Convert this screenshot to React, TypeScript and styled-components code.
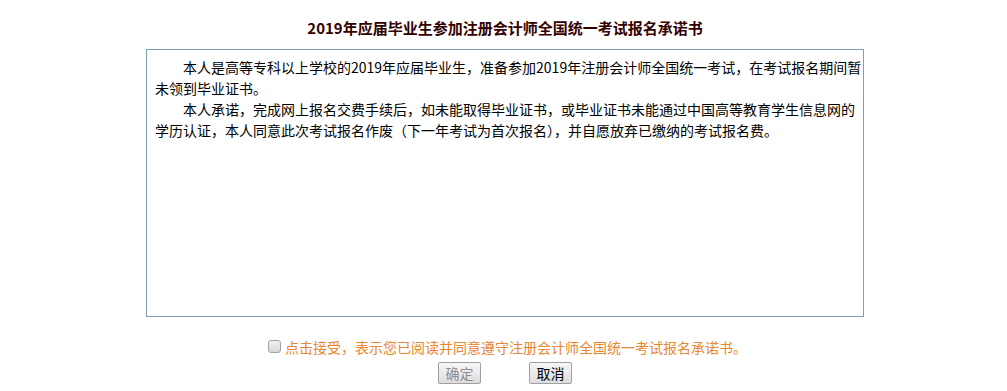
import React, { useState } from "react";
import styled, { createGlobalStyle } from "styled-components";

const GlobalStyle = createGlobalStyle`
	html, body {
		margin: 0;
		padding: 0;
		background: #fff;
	}
	body {
		font-family: "Noto Sans CJK SC", "Liberation Sans", sans-serif;
	}
`;

export default function App() {
	const [agreed, setAgreed] = useState<boolean>(false);
	return (
		<Page>
			<GlobalStyle />
			<Title>2019年应届毕业生参加注册会计师全国统一考试报名承诺书</Title>
			<PledgeBox>
				<Para>
					本人是高等专科以上学校的2019年应届毕业生，准备参加2019年注册会计师全国统一考试，在考试报名期间暂未领到毕业证书。
				</Para>
				<Para>
					本人承诺，完成网上报名交费手续后，如未能取得毕业证书，或毕业证书未能通过中国高等教育学生信息网的学历认证，本人同意此次考试报名作废（下一年考试为首次报名），并自愿放弃已缴纳的考试报名费。
				</Para>
			</PledgeBox>
			<AgreeRow>
				<CheckBox type="checkbox" checked={agreed} onChange={(e) => setAgreed(e.target.checked)} />
				<AgreeText>点击接受，表示您已阅读并同意遵守注册会计师全国统一考试报名承诺书。</AgreeText>
			</AgreeRow>
			<ButtonRow>
				<FormBtn disabled={!agreed}>确定</FormBtn>
				<FormBtn>取消</FormBtn>
			</ButtonRow>
		</Page>
	);
}

const Page = styled.div`
	display: flex;
	flex-direction: column;
	align-items: center;
	width: 100%;
	padding: 18px 0 0 3px;
	box-sizing: border-box;
`;

const Title = styled.h1`
	margin: 0 0 11px 0;
	font-size: 15px;
	line-height: 20px;
	font-weight: bold;
	color: #330000;
	text-align: center;
`;

const PledgeBox = styled.div`
	width: 718px;
	height: 268px;
	box-sizing: border-box;
	border: 1px solid #7f9db9;
	background: #fff;
	padding: 7px 1px 8px 8px;
	overflow: hidden;
`;

const Para = styled.p`
	margin: 0;
	font-size: 14px;
	line-height: 21px;
	color: #000;
	text-indent: 2em;
`;

const AgreeRow = styled.label`
	display: flex;
	align-items: center;
	gap: 4px;
	margin: 20px 0 0 5px;
	height: 20px;
	cursor: pointer;
`;

const CheckBox = styled.input`
	appearance: none;
	margin: 0;
	width: 13px;
	height: 13px;
	box-sizing: border-box;
	border: 1px solid #a3a3a3;
	border-radius: 3px;
	background: linear-gradient(#f0f0f0, #d9d9d9);
	position: relative;
	top: -1px;
	&:checked::after {
		content: "";
		position: absolute;
		left: 3px;
		top: 0px;
		width: 3px;
		height: 7px;
		border: solid #333;
		border-width: 0 2px 2px 0;
		transform: rotate(45deg);
	}
`;

const AgreeText = styled.span`
	font-size: 14px;
	line-height: 20px;
	color: #e8872f;
`;

const ButtonRow = styled.div`
	display: flex;
	gap: 48px;
	margin-top: 5px;
`;

const FormBtn = styled.button`
	width: 43px;
	height: 22px;
	padding: 0;
	box-sizing: border-box;
	border: 1px solid #a0a0a0;
	border-radius: 2px;
	background: linear-gradient(#f7f7f7, #dddddd);
	font-family: "Noto Sans CJK SC", sans-serif;
	font-size: 14px;
	line-height: 20px;
	color: #000;
	&:disabled {
		color: #8d8d8d;
	}
`;
